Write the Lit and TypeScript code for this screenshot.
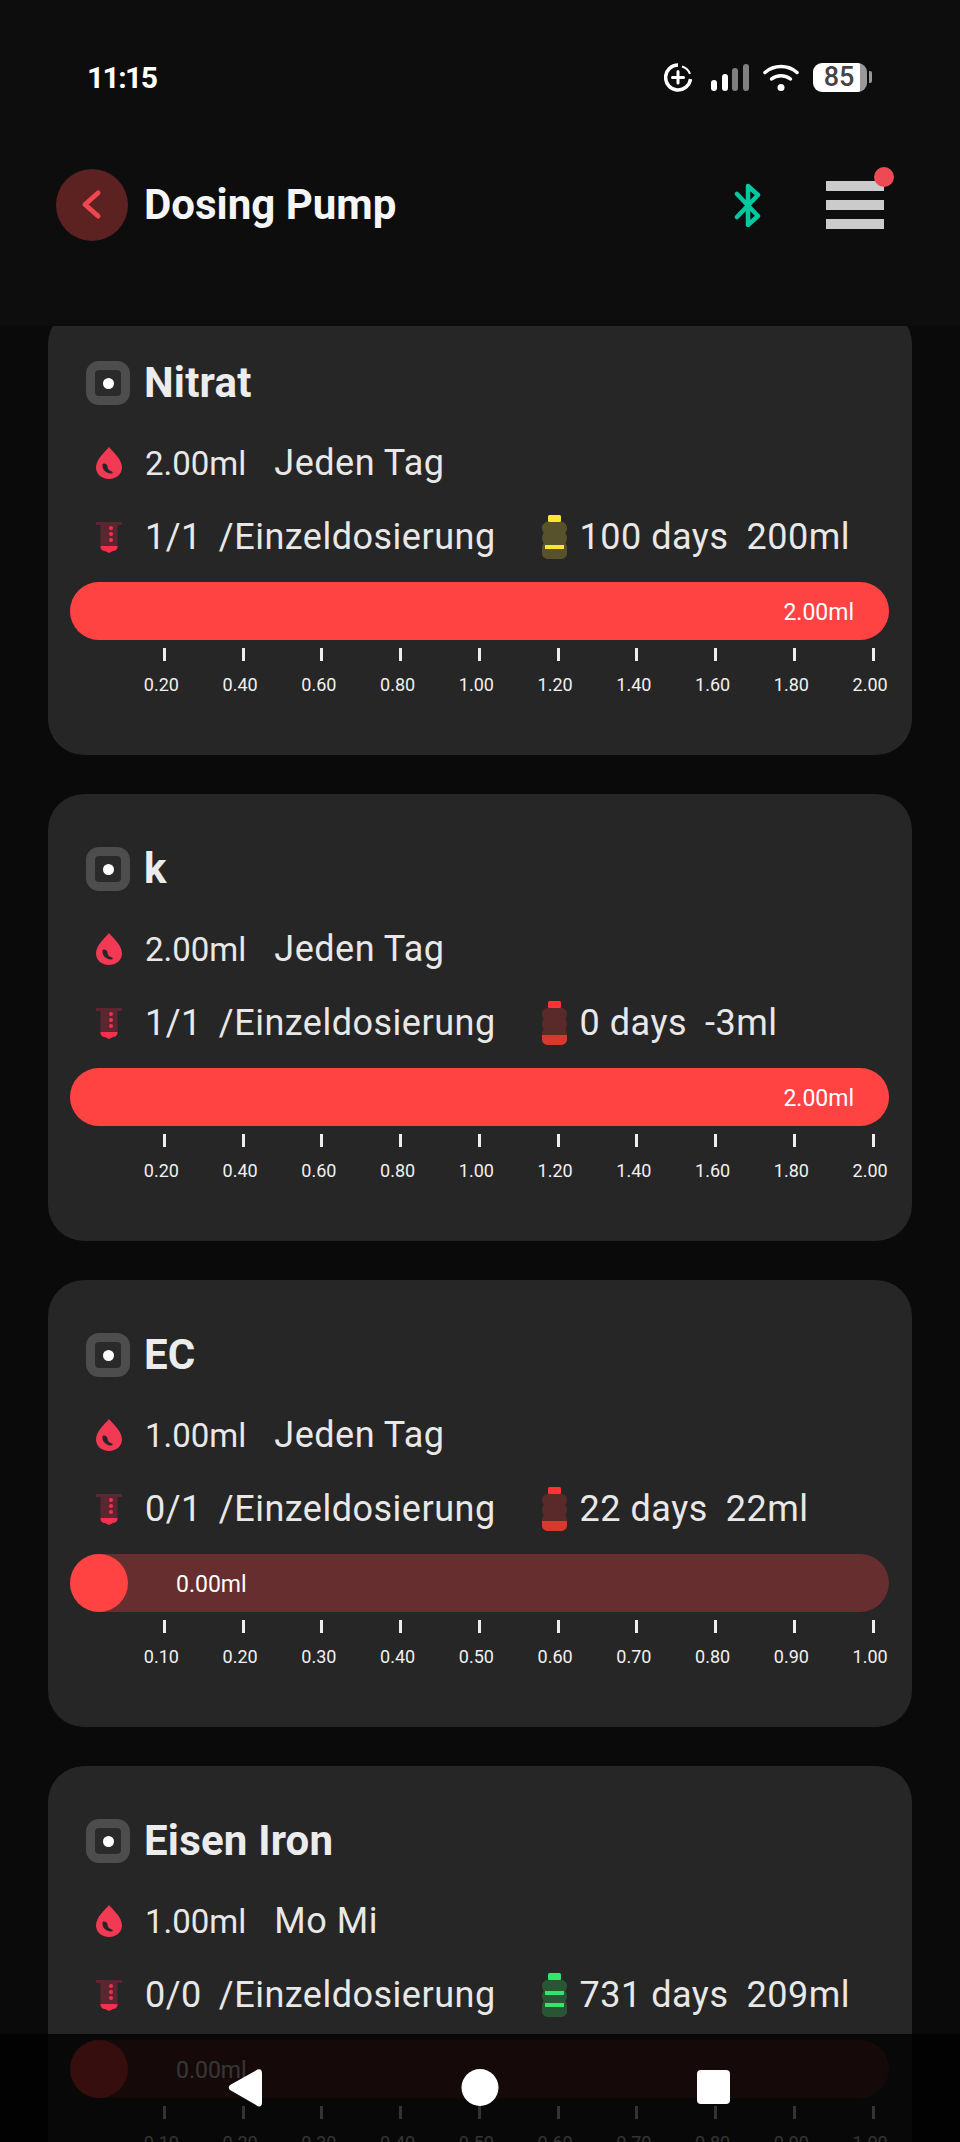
import { LitElement, html, css, svg } from 'lit'
import { customElement } from 'lit/decorators.js'

type Bottle = { body: string; cap: string; bands?: [number, number][]; fill?: string }

type Pump = {
  name: string
  dose: string
  days: string
  count: string
  stock: string
  volume: string
  bottle: Bottle
  current: number
  max: number
}

const YELLOW: Bottle = { body: '#57522b', cap: '#ffe52e', bands: [[30, 34]] }
const RED: Bottle = { body: '#5a2a2a', cap: '#ff3333', fill: '#d8392f' }
const GREEN: Bottle = { body: '#2a5535', cap: '#33e56f', bands: [[18, 22], [30, 34]] }

const PUMPS: Pump[] = [
  { name: 'Nitrat', dose: '2.00ml', days: 'Jeden Tag', count: '1/1', stock: '100 days', volume: '200ml', bottle: YELLOW, current: 2, max: 2 },
  { name: 'k', dose: '2.00ml', days: 'Jeden Tag', count: '1/1', stock: '0 days', volume: '-3ml', bottle: RED, current: 2, max: 2 },
  { name: 'EC', dose: '1.00ml', days: 'Jeden Tag', count: '0/1', stock: '22 days', volume: '22ml', bottle: RED, current: 0, max: 1 },
  { name: 'Eisen Iron', dose: '1.00ml', days: 'Mo Mi', count: '0/0', stock: '731 days', volume: '209ml', bottle: GREEN, current: 0, max: 1 },
]

const BOTTLE_BODY =
  'M7 6H18C22 7 25 9 25 13C25 16 23.500 17 23.500 18C23.500 19 25 20 25 23C25 26 23.500 27 23.500 28C23.500 29 25 30 25 33V38C25 42 22 44 18 44H7C3 44 0 42 0 38V33C0 30 1.500 29 1.500 28C1.500 27 0 26 0 23C0 20 1.500 19 1.500 18C1.500 17 0 16 0 13C0 9 3 7 7 6Z'

const bottleIcon = (b: Bottle, id: string) => html`
  <svg class="bottle" viewBox="0 0 25 44" width="25" height="44">
    <defs><clipPath id=${id}><path d=${BOTTLE_BODY}></path></clipPath></defs>
    <path d=${BOTTLE_BODY} fill=${b.body}></path>
    <rect x="6" y="0" width="13" height="7" rx="1.500" fill=${b.cap}></rect>
    ${b.fill ? svg`<rect x="0" y="34" width="25" height="10" fill=${b.fill} clip-path=${`url(#${id})`}></rect>` : ''}
    ${(b.bands ?? []).map(([a, z]) => svg`<rect x="3" y=${a} width="19" height=${z - a} fill=${b.cap}></rect>`)}
  </svg>
`

const dropIcon = html`
  <svg viewBox="0 0 26 32" width="26" height="32">
    <path d="M13 0C17 5 26 12 26 20.500C26 27 20.500 32 13 32C5.500 32 0 27 0 20.500C0 12 9 5 13 0Z" fill="#f23a54"></path>
    <path d="M6.500 17.500C6 22 9 26 15 26.500C17 26.600 17.500 25.300 16 24.500C13 23.800 11.800 22.500 11.500 19.500C11.200 16.500 7 15.500 6.500 17.500Z" fill="#262626"></path>
  </svg>
`

const tubeIcon = html`
  <svg viewBox="0 0 26 31" width="26" height="31">
    <rect x="0" y="0" width="26" height="3" fill="#5a2730"></rect>
    <path d="M4.500 3H21.500V24H4.500Z" fill="#5a2730"></path>
    <path d="M4.500 24H21.500V25C21.500 27.500 19 29 17 29L13 31L9 29C7 29 4.500 27.500 4.500 25Z" fill="#f5304c"></path>
    <circle cx="15" cy="6" r="2" fill="#f5304c"></circle>
    <circle cx="15" cy="12" r="2" fill="#f5304c"></circle>
    <circle cx="15" cy="18" r="2" fill="#f5304c"></circle>
  </svg>
`

@customElement('app-root')
export class AppRoot extends LitElement {
  static styles = css`
    :host {
      display: block;
      position: relative;
      height: 2142px;
      overflow: hidden;
      background: #0d0d0d;
      font-family: Roboto, 'Liberation Sans', sans-serif;
      color: #ececec;
    }

    .page {
      display: flex;
      flex-direction: column;
      height: 100%;
    }

    /* ---- Status bar ---- */
    .status {
      display: flex;
      align-items: center;
      height: 154px;
      padding: 0 88px 0 87px;
      box-sizing: border-box;
      flex: none;
    }
    .time {
      font-size: 30px;
      font-weight: 700;
      letter-spacing: -1.600px;
      color: #fff;
      margin-right: auto;
    }
    .signal {
      margin-left: 19px;
    }
    .wifi {
      margin-left: 14px;
    }
    .battery {
      display: flex;
      align-items: center;
      margin-left: 14px;
    }
    .battery-body {
      width: 54px;
      height: 29px;
      border-radius: 9px;
      background: linear-gradient(90deg, #fff 87%, #999 87%);
      color: #444;
      font-size: 27px;
      font-weight: 500;
      line-height: 29px;
      text-align: center;
      padding-right: 2px;
      box-sizing: border-box;
    }
    .battery-nub {
      width: 3px;
      height: 12px;
      margin-left: 2px;
      border-radius: 0 2px 2px 0;
      background: #999;
    }

    /* ---- Header ---- */
    .header {
      display: flex;
      align-items: center;
      height: 102px;
      padding: 0 76px 0 56px;
      flex: none;
    }
    .back {
      display: flex;
      width: 72px;
      height: 72px;
      border-radius: 50%;
      background: #5c2222;
    }
    .title {
      margin-left: 16px;
      padding-bottom: 2px;
      font-size: 42px;
      font-weight: 700;
      color: #f5f5f5;
    }
    .bt {
      margin-left: auto;
    }
    .menu {
      position: relative;
      display: flex;
      flex-direction: column;
      gap: 9px;
      width: 58px;
      margin-left: 65px;
    }
    .menu i {
      display: block;
      height: 10px;
      background: #cbcbcb;
    }
    .dot {
      position: absolute;
      top: -14px;
      right: -10px;
      width: 20px;
      height: 20px;
      border-radius: 50%;
      background: #ee4a55;
    }

    /* ---- Cards ---- */
    .list {
      flex: 1;
      min-height: 0;
      margin-top: 70px;
      overflow: hidden;
      background: #0a0a0a;
      padding: 0 48px;
    }
    .cards {
      display: flex;
      flex-direction: column;
      gap: 39px;
      margin-top: -18px;
    }
    .card {
      height: 447px;
      box-sizing: border-box;
      padding: 53px 23px 0 22px;
      border-radius: 36px;
      background: #262626;
      flex: none;
    }
    .name-row {
      display: flex;
      align-items: center;
      gap: 14px;
      height: 44px;
      padding-left: 16px;
      font-size: 42px;
      font-weight: 700;
      letter-spacing: 0.200px;
    }
    .name-row span:last-child {
      padding-bottom: 2px;
    }
    .switch {
      display: flex;
      align-items: center;
      justify-content: center;
      width: 44px;
      height: 44px;
      box-sizing: border-box;
      border: 9px solid #4d4d4d;
      border-radius: 13px;
      background: #2a2a2a;
    }
    .switch i {
      width: 11px;
      height: 11px;
      border-radius: 50%;
      background: #fff;
    }
    .row {
      display: flex;
      align-items: center;
      height: 44px;
      padding-left: 26px;
      font-size: 36px;
      color: #e8e8e8;
      letter-spacing: 0.500px;
      white-space: nowrap;
    }
    .row svg:first-child {
      margin-right: 23px;
    }
    .dose-row {
      margin-top: 36px;
    }
    .usage-row {
      margin-top: 30px;
    }
    .small {
      font-size: 33px;
      letter-spacing: 0;
    }
    .second {
      margin-left: 28px;
    }
    .per {
      margin-left: 17px;
    }
    .bottle {
      margin-left: 46px;
      margin-right: 13px;
    }
    .stock-volume {
      margin-left: 18px;
    }

    /* ---- Dose bar ---- */
    .bar {
      display: flex;
      align-items: center;
      height: 58px;
      margin-top: 23px;
      border-radius: 29px;
      background: #662e2e;
      color: #fff;
      font-size: 23px;
    }
    .fill {
      display: flex;
      align-items: center;
      justify-content: flex-end;
      height: 58px;
      border-radius: 29px;
      background: #ff4343;
      box-sizing: border-box;
    }
    .fill span {
      margin-right: 35px;
      padding-top: 2px;
    }
    .empty-label {
      margin-left: 48px;
      padding-top: 2px;
    }
    .scale {
      display: grid;
      grid-template-columns: repeat(10, 78.750px);
      margin-top: 8px;
      padding-left: 55px;
    }
    .mark {
      display: flex;
      flex-direction: column;
      align-items: center;
    }
    .mark i {
      width: 3px;
      height: 13px;
      background: #eee;
    }
    .mark span {
      margin: 11px 6px 0 0;
      font-size: 18px;
      line-height: 26px;
      color: #f0f0f0;
    }

    /* ---- Navigation bar, laid over the list ---- */
    .nav {
      position: absolute;
      left: 0;
      right: 0;
      bottom: 0;
      height: 108px;
      background: rgba(0, 0, 0, 0.79);
    }
    .nav svg {
      display: block;
    }
  `

  private _card(p: Pump, i: number) {
    const full = p.current >= p.max
    const pct = (p.current / p.max) * 100
    const label = `${p.current.toFixed(2)}ml`
    return html`
      <section class="card">
        <div class="name-row">
          <span class="switch"><i></i></span>
          <span>${p.name}</span>
        </div>
        <div class="row dose-row">
          ${dropIcon}
          <span class="small">${p.dose}</span>
          <span class="second">${p.days}</span>
        </div>
        <div class="row usage-row">
          ${tubeIcon}
          <span>${p.count}</span>
          <span class="per">/Einzeldosierung</span>
          ${bottleIcon(p.bottle, `bottle-${i}`)}
          <span>${p.stock}</span>
          <span class="stock-volume">${p.volume}</span>
        </div>
        <div class="bar">
          ${full
            ? html`<div class="fill" style="width: ${pct}%"><span>${label}</span></div>`
            : html`<div class="fill" style="width: 58px"></div><span class="empty-label">${label}</span>`}
        </div>
        <div class="scale">
          ${Array.from({ length: 10 }, (_, n) => html`
            <div class="mark"><i></i><span>${(((n + 1) * p.max) / 10).toFixed(2)}</span></div>
          `)}
        </div>
      </section>
    `
  }

  render() {
    return html`
      <div class="page">
        <div class="status">
          <span class="time">11:15</span>
          <svg viewBox="0 0 28 29" width="28" height="29">
            <path d="M14 2A12.500 12.500 0 1 0 26.500 16" fill="none" stroke="#fff" stroke-width="3.500"></path>
            <path d="M18 3.500A12 12 0 0 1 26 11" fill="none" stroke="#fff" stroke-width="2"></path>
            <path d="M14 8.500V20M8.500 14.500H19.500" stroke="#fff" stroke-width="3" stroke-linecap="round"></path>
          </svg>
          <svg class="signal" viewBox="0 0 38 27" width="38" height="27">
            <rect x="0" y="16" width="6" height="11" rx="3" fill="#fff"></rect>
            <rect x="11" y="10" width="6" height="17" rx="3" fill="#fff"></rect>
            <rect x="21" y="4" width="6" height="23" rx="3" fill="#808080"></rect>
            <rect x="32" y="0" width="6" height="27" rx="3" fill="#808080"></rect>
          </svg>
          <svg class="wifi" viewBox="0 0 36 27" width="36" height="27">
            <path d="M2 8.500C11 0.500 25 0.500 34 8.500" fill="none" stroke="#fff" stroke-width="3.500" stroke-linecap="round"></path>
            <path d="M8.500 15C14 10.500 22 10.500 27.500 15" fill="none" stroke="#fff" stroke-width="3.500" stroke-linecap="round"></path>
            <circle cx="18" cy="23.500" r="3.500" fill="#fff"></circle>
          </svg>
          <div class="battery">
            <div class="battery-body">85</div>
            <div class="battery-nub"></div>
          </div>
        </div>

        <header class="header">
          <div class="back">
            <svg viewBox="0 0 72 72" width="72" height="72">
              <path d="M42 24L29 35.500L42 47" fill="none" stroke="#ef4750" stroke-width="5" stroke-linecap="round" stroke-linejoin="round"></path>
            </svg>
          </div>
          <span class="title">Dosing Pump</span>
          <svg class="bt" viewBox="0 0 27 44" width="27" height="44">
            <path d="M3 11L24 33L14 42V3L24 12L3 34" fill="none" stroke="#00c9a0" stroke-width="4.500" stroke-linecap="round" stroke-linejoin="round"></path>
          </svg>
          <div class="menu">
            <i></i><i></i><i></i>
            <span class="dot"></span>
          </div>
        </header>

        <main class="list">
          <div class="cards">${PUMPS.map((p, i) => this._card(p, i))}</div>
        </main>
      </div>

      <nav class="nav">
        <svg viewBox="0 0 960 108" width="960" height="108">
          <path d="M256 36.500Q258 34.500 260.500 35.500Q262 36.500 262 39V69Q262 72 260 72.500Q258 73 256 71L230 56Q227.500 53.500 230 51Z" fill="#fff"></path>
          <circle cx="480" cy="53.500" r="18.500" fill="#fff"></circle>
          <rect x="697" y="36" width="33" height="34" rx="4" fill="#fff"></rect>
        </svg>
      </nav>
    `
  }
}

declare global {
  interface HTMLElementTagNameMap {
    'app-root': AppRoot
  }
}
